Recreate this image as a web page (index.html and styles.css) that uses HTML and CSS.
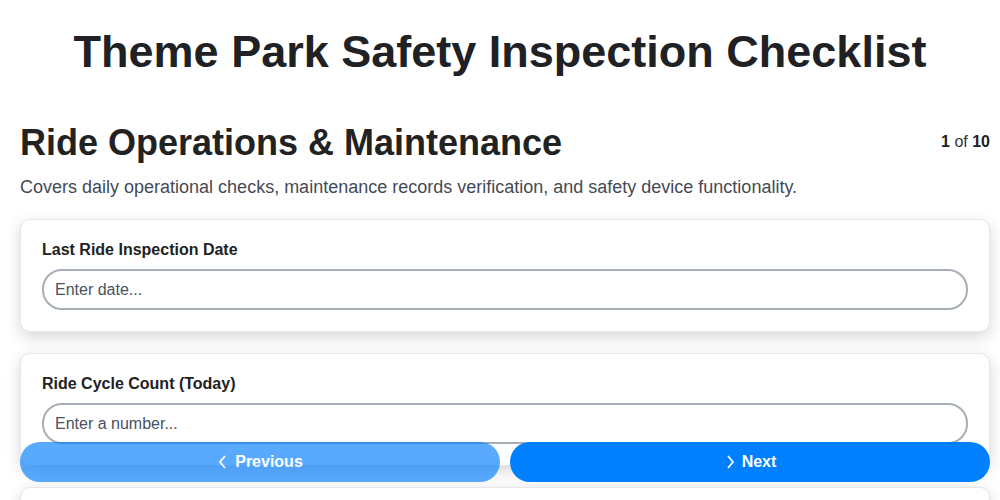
FILE: index.html
```html
<!DOCTYPE html>
<html>
  <head>
    <meta charset="UTF-8" />
    <title>Theme Park Safety Inspection Checklist</title>
    <link rel="stylesheet" href="styles.css">
  </head>

  <body>
    <h1 class="page-title">Theme Park Safety Inspection Checklist</h1>

    <div class="wrap">
      <div class="section-head">
        <h2 class="section-title">Ride Operations &amp; Maintenance</h2>
        <div class="section-count"><b>1</b> of <b>10</b></div>
      </div>
      <p class="section-desc">
        Covers daily operational checks, maintenance records verification, and safety device functionality.
      </p>

      <div class="card">
        <label class="field-label">Last Ride Inspection Date</label>
        <input class="field-input" type="text" placeholder="Enter date..." />
      </div>

      <div class="card">
        <label class="field-label">Ride Cycle Count (Today)</label>
        <input class="field-input" type="text" placeholder="Enter a number..." />
      </div>

      <div class="card">
        <label class="field-label">Safety Restraint Check</label>
        <input class="field-input" type="text" placeholder="Enter notes..." />
      </div>
    </div>

    <div class="nav-bar">
      <button class="nav-btn nav-prev">
        <svg width="12" height="16" viewBox="0 0 12 16"><path d="M8 2 L3 8 L8 14" fill="none" stroke="#fff" stroke-width="1.8" /></svg>
        Previous
      </button>
      <button class="nav-btn nav-next">
        <svg width="12" height="16" viewBox="0 0 12 16"><path d="M4 2 L9 8 L4 14" fill="none" stroke="#fff" stroke-width="1.8" /></svg>
        Next
      </button>
    </div>
  </body>
</html>
```

FILE: styles.css
```css
body {
  margin: 0;
  background: #fff;
  color: #222;
  font-family: "Liberation Sans", Arial, sans-serif;
}

.page-title {
  margin: 26px 0 0;
  font-size: 45px;
  line-height: 52px;
  text-align: center;
  color: #202124;
}

.wrap {
  padding: 0 10px 0 20px;
}

.section-head {
  display: flex;
  justify-content: space-between;
  align-items: flex-start;
  margin-top: 43px;
}

.section-title {
  margin: 0;
  font-size: 36px;
  line-height: 44px;
  color: #222;
}

.section-count {
  font-size: 16px;
  padding-top: 12px;
  color: #333;
}

.section-count b {
  color: #222;
}

.section-desc {
  margin: 12px 0 21px;
  font-size: 18px;
  color: #444a55;
}

.card {
  background: #fff;
  border: 1px solid #e6e6eb;
  border-radius: 10px;
  box-shadow: 0 5px 16px rgba(0, 0, 0, 0.16);
  padding: 21px 21px 21px;
  margin-bottom: 21px;
}

.field-label {
  display: block;
  font-size: 16px;
  font-weight: bold;
  color: #222;
  margin-bottom: 10px;
}

.field-input {
  display: block;
  box-sizing: border-box;
  width: 100%;
  height: 41px;
  padding: 0 11px;
  border: 2px solid #a7aeb8;
  border-radius: 20px;
  font-family: inherit;
  font-size: 16px;
  color: #333;
}

.field-input::placeholder {
  color: #4a5161;
}

.nav-bar {
  position: fixed;
  left: 20px;
  right: 10px;
  bottom: 18px;
  display: flex;
  gap: 10px;
}

.nav-btn {
  flex: 1;
  height: 40px;
  border: none;
  border-radius: 20px;
  color: #fff;
  font-family: inherit;
  font-size: 16px;
  font-weight: bold;
  display: flex;
  align-items: center;
  justify-content: center;
  gap: 6px;
}

.nav-prev {
  background: #007bff;
  opacity: 0.65;
}

.nav-next {
  background: #0080ff;
}
```
